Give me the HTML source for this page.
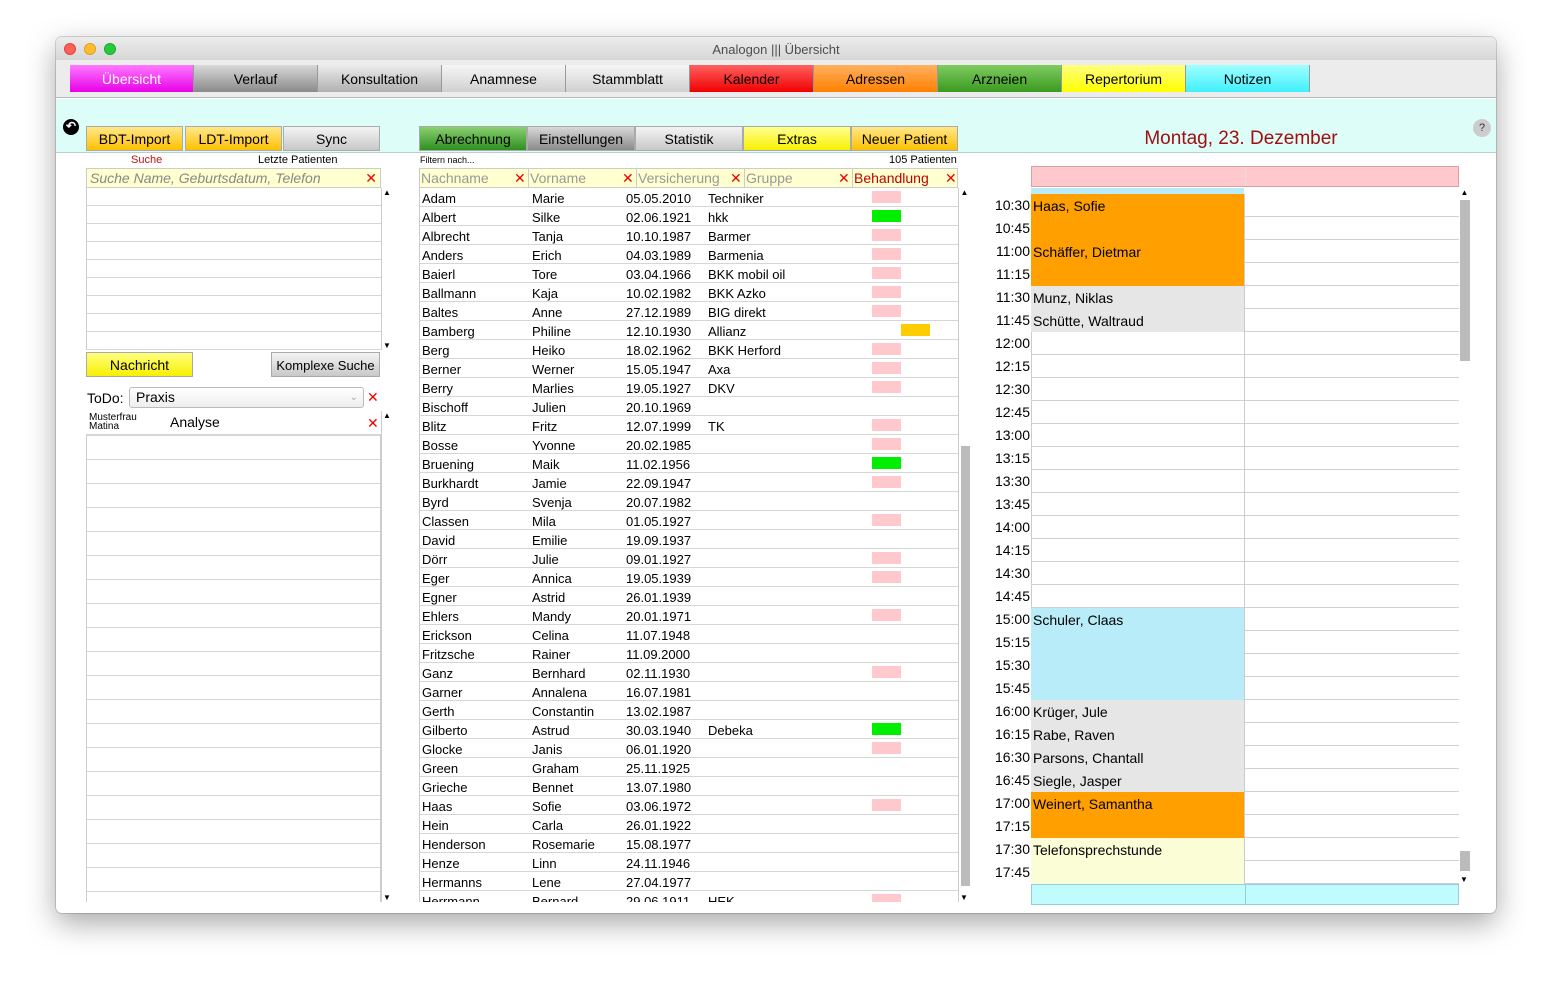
<!DOCTYPE html>
<html><head><meta charset="utf-8"><style>
*{box-sizing:border-box;margin:0;padding:0}
body{width:1552px;height:988px;background:#fff;font-family:"Liberation Sans",sans-serif;font-size:13px;color:#000;position:relative;overflow:hidden}
.a{position:absolute}
#win{left:56px;top:37px;width:1440px;height:876px;background:#fff;border-radius:6px;box-shadow:0 10px 30px rgba(0,0,0,.35),0 0 0 1px rgba(0,0,0,.15);overflow:hidden}
#title{left:0;top:0;width:1440px;height:24px;background:linear-gradient(#ececec,#d6d6d6);text-align:center;line-height:25px;color:#4d4d4d;font-size:13px}
.dot{top:6px;width:12px;height:12px;border-radius:50%}
#tabs{left:0;top:23px;width:1440px;height:38px;background:#ececec;border-bottom:1px solid #bbb}
.tab{top:5px;width:124px;height:27px;text-align:center;line-height:28px;font-size:14px;border-right:1px solid #999}
#cyan{left:0;top:62px;width:1440px;height:54px;background:#dcfdf8;border-bottom:1px solid #b9cfcc}
.btn{height:25px;text-align:center;line-height:25px;font-size:14px;border:1px solid #aaa}
.g{background:linear-gradient(#f4f4f4,#c8c8c8)}
.yo{background:linear-gradient(#ffe88a,#ffc000)}
.row{position:absolute;left:0;height:19px;border-bottom:1px solid #d6d6d6;line-height:21px;font-size:13px}
.x{color:#e00;font-size:14px}
.sb{background:#fff;border-left:1px solid #ccc}
</style></head><body>
<div id="win" class="a">
<div id="title" class="a">Analogon ||| Übersicht</div>
<div class="a dot" style="left:8px;background:#fe5f57;border:1px solid #e0443e"></div>
<div class="a dot" style="left:28px;background:#febc2e;border:1px solid #dea123"></div>
<div class="a dot" style="left:48px;background:#28c840;border:1px solid #1aab29"></div>
<div id="tabs" class="a">
<div class="a tab" style="left:14px;background:linear-gradient(#ff7aff,#e800e8);color:#fff">Übersicht</div>
<div class="a tab" style="left:138px;background:linear-gradient(#d8d8d8,#8a8a8a)">Verlauf</div>
<div class="a tab" style="left:262px;background:linear-gradient(#ececec,#b0b0b0)">Konsultation</div>
<div class="a tab" style="left:386px;background:linear-gradient(#f6f6f6,#d0d0d0)">Anamnese</div>
<div class="a tab" style="left:510px;background:linear-gradient(#f6f6f6,#d0d0d0)">Stammblatt</div>
<div class="a tab" style="left:634px;background:linear-gradient(#ff6060,#f00000)">Kalender</div>
<div class="a tab" style="left:758px;background:linear-gradient(#ffb060,#ff8000)">Adressen</div>
<div class="a tab" style="left:882px;background:linear-gradient(#80cc60,#3a9a20)">Arzneien</div>
<div class="a tab" style="left:1006px;background:linear-gradient(#ffff80,#ffff00)">Repertorium</div>
<div class="a tab" style="left:1130px;background:linear-gradient(#a0ffff,#40f0ff)">Notizen</div>
</div>
<div id="cyan" class="a"></div>
<div class="a" style="left:7px;top:82px;width:16px;height:16px;border-radius:50%;background:#000;color:#fff;font-size:12px;line-height:15px;text-align:center;font-weight:bold">↶</div>
<div class="a btn yo" style="left:30px;top:89px;width:97px">BDT-Import</div>
<div class="a btn yo" style="left:129px;top:89px;width:97px">LDT-Import</div>
<div class="a btn g" style="left:227px;top:89px;width:97px">Sync</div>
<div class="a btn" style="left:363px;top:89px;width:108px;background:linear-gradient(#8ad070,#2f8f1f)">Abrechnung</div>
<div class="a btn" style="left:471px;top:89px;width:108px;background:linear-gradient(#d8d8d8,#8a8a8a)">Einstellungen</div>
<div class="a btn g" style="left:579px;top:89px;width:108px">Statistik</div>
<div class="a btn" style="left:687px;top:89px;width:108px;background:linear-gradient(#ffff90,#f8f000)">Extras</div>
<div class="a btn yo" style="left:795px;top:89px;width:107px">Neuer Patient</div>
<div class="a" style="left:975px;top:91px;width:420px;text-align:center;font-size:19px;color:#a01010">Montag, 23. Dezember</div>
<div class="a" style="left:1417px;top:82px;width:18px;height:18px;border-radius:50%;background:#ccc;text-align:center;line-height:18px;font-size:11px;color:#333">?</div>

<!-- left panel -->
<div class="a" style="left:75px;top:117px;font-size:11px;color:#c01010">Suche</div>
<div class="a" style="left:202px;top:117px;font-size:11px">Letzte Patienten</div>
<div class="a" style="left:30px;top:131px;width:295px;height:20px;background:#ffffd0;border:1px solid #ccc;font-style:italic;color:#888;font-size:14px;line-height:19px;padding-left:3px">Suche Name, Geburtsdatum, Telefon<span class="x a" style="right:3px;top:0;font-style:normal">✕</span></div>
<div class="a" style="left:30px;top:151px;width:295px;height:162px;border-left:1px solid #ccc;background:repeating-linear-gradient(#fff 0 17px,#d6d6d6 17px 18px)"></div>
<div class="a sb" style="left:325px;top:151px;width:11px;height:162px;font-size:8px;text-align:center">▲<div class="a" style="bottom:0;left:1px">▼</div></div>
<div class="a btn" style="left:30px;top:315px;width:107px;background:linear-gradient(#ffff80,#f8f000)">Nachricht</div>
<div class="a btn g" style="left:215px;top:315px;width:109px;font-size:13px">Komplexe Suche</div>
<div class="a" style="left:31px;top:353px;font-size:14px">ToDo:</div>
<div class="a" style="left:73px;top:350px;width:235px;height:21px;border:1px solid #bbb;border-radius:3px;background:linear-gradient(#fff,#eee);font-size:14px;line-height:19px;padding-left:6px">Praxis<span class="a" style="right:5px;top:0;color:#aaa;font-size:10px">⌄</span></div>
<div class="a x" style="left:311px;top:352px">✕</div>
<div class="a" style="left:30px;top:374px;width:295px;height:491px;border:1px solid #ccc;border-bottom:none;background:repeating-linear-gradient(#fff 0 23px,#d6d6d6 23px 24px)"></div>
<div class="a" style="left:30px;top:374px;width:295px;height:24px;background:#fff;border-bottom:1px solid #d6d6d6"></div>
<div class="a" style="left:33px;top:376px;font-size:10px;line-height:9px">Musterfrau<br>Matina</div>
<div class="a" style="left:114px;top:377px;font-size:14px">Analyse</div>
<div class="a x" style="left:311px;top:378px">✕</div>
<div class="a sb" style="left:325px;top:374px;width:11px;height:491px;font-size:8px;text-align:center">▲<div class="a" style="bottom:0;left:1px">▼</div></div>

<!-- middle table -->
<div class="a" style="left:364px;top:118px;font-size:9px">Filtern nach...</div>
<div class="a" style="left:833px;top:117px;font-size:11px">105 Patienten</div>
<div class="a" style="left:363px;top:131px;width:539px;height:20px;background:#ffffd0;border:1px solid #ccc;font-size:14px;line-height:19px;color:#999">
<span class="a" style="left:1px">Nachname</span><span class="a x" style="left:94px">✕</span>
<span class="a" style="left:108px;border-left:1px solid #ccc;padding-left:1px">Vorname</span><span class="a x" style="left:202px">✕</span>
<span class="a" style="left:216px;border-left:1px solid #ccc;padding-left:1px">Versicherung</span><span class="a x" style="left:310px">✕</span>
<span class="a" style="left:324px;border-left:1px solid #ccc;padding-left:1px">Gruppe</span><span class="a x" style="left:418px">✕</span>
<span class="a" style="left:432px;border-left:1px solid #ccc;padding-left:1px;color:#c00000">Behandlung</span><span class="a x" style="left:525px">✕</span>
</div>
<div class="a" style="left:363px;top:151px;width:539px;height:714px;overflow:hidden;border-left:1px solid #ccc">
<div id="tb" style="position:relative">
<div class="row" style="top:0;width:539px"><span class="a" style="left:2px">Adam</span><span class="a" style="left:112px">Marie</span><span class="a" style="left:206px">05.05.2010</span><span class="a" style="left:288px">Techniker</span><span class="a" style="left:452px;top:3px;width:29px;height:12px;background:#ffc8cc"></span></div>
<div class="row" style="top:19px;width:539px"><span class="a" style="left:2px">Albert</span><span class="a" style="left:112px">Silke</span><span class="a" style="left:206px">02.06.1921</span><span class="a" style="left:288px">hkk</span><span class="a" style="left:452px;top:3px;width:29px;height:12px;background:#00ee00"></span></div>
<div class="row" style="top:38px;width:539px"><span class="a" style="left:2px">Albrecht</span><span class="a" style="left:112px">Tanja</span><span class="a" style="left:206px">10.10.1987</span><span class="a" style="left:288px">Barmer</span><span class="a" style="left:452px;top:3px;width:29px;height:12px;background:#ffc8cc"></span></div>
<div class="row" style="top:57px;width:539px"><span class="a" style="left:2px">Anders</span><span class="a" style="left:112px">Erich</span><span class="a" style="left:206px">04.03.1989</span><span class="a" style="left:288px">Barmenia</span><span class="a" style="left:452px;top:3px;width:29px;height:12px;background:#ffc8cc"></span></div>
<div class="row" style="top:76px;width:539px"><span class="a" style="left:2px">Baierl</span><span class="a" style="left:112px">Tore</span><span class="a" style="left:206px">03.04.1966</span><span class="a" style="left:288px">BKK mobil oil</span><span class="a" style="left:452px;top:3px;width:29px;height:12px;background:#ffc8cc"></span></div>
<div class="row" style="top:95px;width:539px"><span class="a" style="left:2px">Ballmann</span><span class="a" style="left:112px">Kaja</span><span class="a" style="left:206px">10.02.1982</span><span class="a" style="left:288px">BKK Azko</span><span class="a" style="left:452px;top:3px;width:29px;height:12px;background:#ffc8cc"></span></div>
<div class="row" style="top:114px;width:539px"><span class="a" style="left:2px">Baltes</span><span class="a" style="left:112px">Anne</span><span class="a" style="left:206px">27.12.1989</span><span class="a" style="left:288px">BIG direkt</span><span class="a" style="left:452px;top:3px;width:29px;height:12px;background:#ffc8cc"></span></div>
<div class="row" style="top:133px;width:539px"><span class="a" style="left:2px">Bamberg</span><span class="a" style="left:112px">Philine</span><span class="a" style="left:206px">12.10.1930</span><span class="a" style="left:288px">Allianz</span><span class="a" style="left:481px;top:3px;width:29px;height:12px;background:#ffcc00"></span></div>
<div class="row" style="top:152px;width:539px"><span class="a" style="left:2px">Berg</span><span class="a" style="left:112px">Heiko</span><span class="a" style="left:206px">18.02.1962</span><span class="a" style="left:288px">BKK Herford</span><span class="a" style="left:452px;top:3px;width:29px;height:12px;background:#ffc8cc"></span></div>
<div class="row" style="top:171px;width:539px"><span class="a" style="left:2px">Berner</span><span class="a" style="left:112px">Werner</span><span class="a" style="left:206px">15.05.1947</span><span class="a" style="left:288px">Axa</span><span class="a" style="left:452px;top:3px;width:29px;height:12px;background:#ffc8cc"></span></div>
<div class="row" style="top:190px;width:539px"><span class="a" style="left:2px">Berry</span><span class="a" style="left:112px">Marlies</span><span class="a" style="left:206px">19.05.1927</span><span class="a" style="left:288px">DKV</span><span class="a" style="left:452px;top:3px;width:29px;height:12px;background:#ffc8cc"></span></div>
<div class="row" style="top:209px;width:539px"><span class="a" style="left:2px">Bischoff</span><span class="a" style="left:112px">Julien</span><span class="a" style="left:206px">20.10.1969</span></div>
<div class="row" style="top:228px;width:539px"><span class="a" style="left:2px">Blitz</span><span class="a" style="left:112px">Fritz</span><span class="a" style="left:206px">12.07.1999</span><span class="a" style="left:288px">TK</span><span class="a" style="left:452px;top:3px;width:29px;height:12px;background:#ffc8cc"></span></div>
<div class="row" style="top:247px;width:539px"><span class="a" style="left:2px">Bosse</span><span class="a" style="left:112px">Yvonne</span><span class="a" style="left:206px">20.02.1985</span><span class="a" style="left:452px;top:3px;width:29px;height:12px;background:#ffc8cc"></span></div>
<div class="row" style="top:266px;width:539px"><span class="a" style="left:2px">Bruening</span><span class="a" style="left:112px">Maik</span><span class="a" style="left:206px">11.02.1956</span><span class="a" style="left:452px;top:3px;width:29px;height:12px;background:#00ee00"></span></div>
<div class="row" style="top:285px;width:539px"><span class="a" style="left:2px">Burkhardt</span><span class="a" style="left:112px">Jamie</span><span class="a" style="left:206px">22.09.1947</span><span class="a" style="left:452px;top:3px;width:29px;height:12px;background:#ffc8cc"></span></div>
<div class="row" style="top:304px;width:539px"><span class="a" style="left:2px">Byrd</span><span class="a" style="left:112px">Svenja</span><span class="a" style="left:206px">20.07.1982</span></div>
<div class="row" style="top:323px;width:539px"><span class="a" style="left:2px">Classen</span><span class="a" style="left:112px">Mila</span><span class="a" style="left:206px">01.05.1927</span><span class="a" style="left:452px;top:3px;width:29px;height:12px;background:#ffc8cc"></span></div>
<div class="row" style="top:342px;width:539px"><span class="a" style="left:2px">David</span><span class="a" style="left:112px">Emilie</span><span class="a" style="left:206px">19.09.1937</span></div>
<div class="row" style="top:361px;width:539px"><span class="a" style="left:2px">Dörr</span><span class="a" style="left:112px">Julie</span><span class="a" style="left:206px">09.01.1927</span><span class="a" style="left:452px;top:3px;width:29px;height:12px;background:#ffc8cc"></span></div>
<div class="row" style="top:380px;width:539px"><span class="a" style="left:2px">Eger</span><span class="a" style="left:112px">Annica</span><span class="a" style="left:206px">19.05.1939</span><span class="a" style="left:452px;top:3px;width:29px;height:12px;background:#ffc8cc"></span></div>
<div class="row" style="top:399px;width:539px"><span class="a" style="left:2px">Egner</span><span class="a" style="left:112px">Astrid</span><span class="a" style="left:206px">26.01.1939</span></div>
<div class="row" style="top:418px;width:539px"><span class="a" style="left:2px">Ehlers</span><span class="a" style="left:112px">Mandy</span><span class="a" style="left:206px">20.01.1971</span><span class="a" style="left:452px;top:3px;width:29px;height:12px;background:#ffc8cc"></span></div>
<div class="row" style="top:437px;width:539px"><span class="a" style="left:2px">Erickson</span><span class="a" style="left:112px">Celina</span><span class="a" style="left:206px">11.07.1948</span></div>
<div class="row" style="top:456px;width:539px"><span class="a" style="left:2px">Fritzsche</span><span class="a" style="left:112px">Rainer</span><span class="a" style="left:206px">11.09.2000</span></div>
<div class="row" style="top:475px;width:539px"><span class="a" style="left:2px">Ganz</span><span class="a" style="left:112px">Bernhard</span><span class="a" style="left:206px">02.11.1930</span><span class="a" style="left:452px;top:3px;width:29px;height:12px;background:#ffc8cc"></span></div>
<div class="row" style="top:494px;width:539px"><span class="a" style="left:2px">Garner</span><span class="a" style="left:112px">Annalena</span><span class="a" style="left:206px">16.07.1981</span></div>
<div class="row" style="top:513px;width:539px"><span class="a" style="left:2px">Gerth</span><span class="a" style="left:112px">Constantin</span><span class="a" style="left:206px">13.02.1987</span></div>
<div class="row" style="top:532px;width:539px"><span class="a" style="left:2px">Gilberto</span><span class="a" style="left:112px">Astrud</span><span class="a" style="left:206px">30.03.1940</span><span class="a" style="left:288px">Debeka</span><span class="a" style="left:452px;top:3px;width:29px;height:12px;background:#00ee00"></span></div>
<div class="row" style="top:551px;width:539px"><span class="a" style="left:2px">Glocke</span><span class="a" style="left:112px">Janis</span><span class="a" style="left:206px">06.01.1920</span><span class="a" style="left:452px;top:3px;width:29px;height:12px;background:#ffc8cc"></span></div>
<div class="row" style="top:570px;width:539px"><span class="a" style="left:2px">Green</span><span class="a" style="left:112px">Graham</span><span class="a" style="left:206px">25.11.1925</span></div>
<div class="row" style="top:589px;width:539px"><span class="a" style="left:2px">Grieche</span><span class="a" style="left:112px">Bennet</span><span class="a" style="left:206px">13.07.1980</span></div>
<div class="row" style="top:608px;width:539px"><span class="a" style="left:2px">Haas</span><span class="a" style="left:112px">Sofie</span><span class="a" style="left:206px">03.06.1972</span><span class="a" style="left:452px;top:3px;width:29px;height:12px;background:#ffc8cc"></span></div>
<div class="row" style="top:627px;width:539px"><span class="a" style="left:2px">Hein</span><span class="a" style="left:112px">Carla</span><span class="a" style="left:206px">26.01.1922</span></div>
<div class="row" style="top:646px;width:539px"><span class="a" style="left:2px">Henderson</span><span class="a" style="left:112px">Rosemarie</span><span class="a" style="left:206px">15.08.1977</span></div>
<div class="row" style="top:665px;width:539px"><span class="a" style="left:2px">Henze</span><span class="a" style="left:112px">Linn</span><span class="a" style="left:206px">24.11.1946</span></div>
<div class="row" style="top:684px;width:539px"><span class="a" style="left:2px">Hermanns</span><span class="a" style="left:112px">Lene</span><span class="a" style="left:206px">27.04.1977</span></div>
<div class="row" style="top:703px;width:539px"><span class="a" style="left:2px">Herrmann</span><span class="a" style="left:112px">Bernard</span><span class="a" style="left:206px">29.06.1911</span><span class="a" style="left:288px">HEK</span><span class="a" style="left:452px;top:3px;width:29px;height:12px;background:#ffc8cc"></span></div>
</div></div>
<div class="a sb" style="left:902px;top:151px;width:12px;height:714px;font-size:8px;text-align:center">▲<div class="a" style="left:2px;top:258px;width:9px;height:440px;background:#bbb"></div><div class="a" style="bottom:0;left:1px">▼</div></div>

<!-- calendar -->
<div class="a" style="left:975px;top:129px;width:428px;height:21px;background:#ffc8cc;border:1px solid #d9a0a5"><div class="a" style="left:213px;top:0;width:1px;height:19px;background:#e0e0e0"></div></div>
<div class="a" style="left:975px;top:151px;width:213px;height:6px;background:#b8ecf8"></div>
<div class="a" style="left:975px;top:157px;width:428px;height:690px;background:repeating-linear-gradient(#fff 0 22px,#d0d0d0 22px 23px);border-left:1px solid #ccc"></div>
<div class="a" style="left:975px;top:157px;width:213px;height:92px;background:#ffa000"></div>
<div class="a" style="left:975px;top:249px;width:213px;height:46px;background:#e6e6e6"></div>
<div class="a" style="left:975px;top:571px;width:213px;height:92px;background:#b8ecf8"></div>
<div class="a" style="left:975px;top:663px;width:213px;height:92px;background:#e6e6e6"></div>
<div class="a" style="left:975px;top:755px;width:213px;height:46px;background:#ffa000"></div>
<div class="a" style="left:975px;top:801px;width:213px;height:46px;background:#fbfdd6"></div>
<div class="a" style="left:1188px;top:157px;width:1px;height:690px;background:#ccc"></div>
<div class="a" style="left:975px;top:847px;width:428px;height:21px;background:#c0fcfd;border:1px solid #9cd"><div class="a" style="left:213px;top:0;width:1px;height:19px;background:#9cd"></div></div>
<div class="a" style="left:1403px;top:151px;width:11px;height:696px;font-size:8px;text-align:center;background:#fff">▲<div class="a" style="left:1px;top:12px;width:10px;height:161px;background:#bbb"></div><div class="a" style="left:1px;top:663px;width:10px;height:20px;background:#bbb"></div><div class="a" style="bottom:0;left:1px">▼</div></div>
<div class="a" style="left:925px;top:157px;width:49px;font-size:14px;line-height:23px;text-align:right">10:30<br>10:45<br>11:00<br>11:15<br>11:30<br>11:45<br>12:00<br>12:15<br>12:30<br>12:45<br>13:00<br>13:15<br>13:30<br>13:45<br>14:00<br>14:15<br>14:30<br>14:45<br>15:00<br>15:15<br>15:30<br>15:45<br>16:00<br>16:15<br>16:30<br>16:45<br>17:00<br>17:15<br>17:30<br>17:45</div>
<div class="a" style="left:977px;top:158px;font-size:14px;line-height:23px">Haas, Sofie<br><br>Schäffer, Dietmar<br><br>Munz, Niklas<br>Schütte, Waltraud</div>
<div class="a" style="left:977px;top:572px;font-size:14px;line-height:23px">Schuler, Claas<br><br><br><br>Krüger, Jule<br>Rabe, Raven<br>Parsons, Chantall<br>Siegle, Jasper<br>Weinert, Samantha<br><br>Telefonsprechstunde</div>
</div>
</body></html>
